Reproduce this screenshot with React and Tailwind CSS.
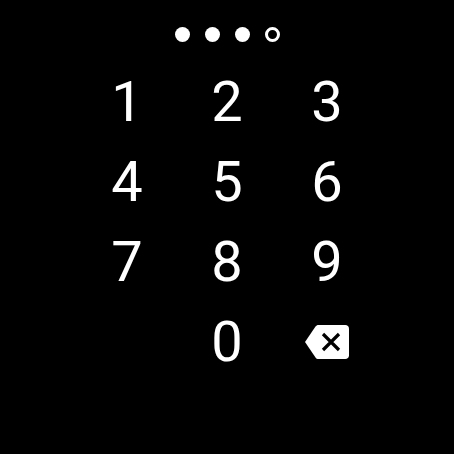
import { useState } from 'react';

const PIN_LENGTH = 4;
const KEYS = ['1', '2', '3', '4', '5', '6', '7', '8', '9', '', '0', 'del'];

function BackspaceIcon() {
  return (
    <svg viewBox="0 0 44 34" className="w-11 h-[34px]" aria-hidden="true">
      <path
        fill="#fff"
        d="M40.3 0H13.5c-1.3 0-2.3.6-3 1.6L0 17l10.500 15.400c.7 1 1.700 1.600 3 1.600h26.800c2 0 3.700-1.500 3.700-3.500v-27c0-2-1.700-3.500-3.700-3.500z"
      />
      <path stroke="#000" strokeWidth="3.200" d="M18 9l16 16M34 9l-16 16" />
    </svg>
  );
}

export default function App() {
  const [pin, setPin] = useState('123');

  const handlePress = (key) => {
    if (key === 'del') {
      setPin(pin.slice(0, -1));
    } else if (pin.length < PIN_LENGTH) {
      setPin(pin + key);
    }
  };

  return (
    <div className="w-[454px] h-[454px] bg-black text-white font-['Roboto',sans-serif] flex flex-col items-center overflow-hidden">
      <div className="flex gap-[15px] mt-[27px]">
        {Array.from({ length: PIN_LENGTH }).map((_, i) => (
          <span
            key={i}
            className={`w-[15px] h-[15px] rounded-full ${
              i < pin.length ? 'bg-white' : 'border-[3px] border-white'
            }`}
          />
        ))}
      </div>

      <div className="grid grid-cols-[repeat(3,100px)] auto-rows-[80px] mt-[20px]">
        {KEYS.map((key, i) =>
          key === '' ? (
            <span key={i} />
          ) : (
            <button
              key={i}
              onClick={() => handlePress(key)}
              className="flex items-center justify-center text-[56px] leading-none"
            >
              {key === 'del' ? <BackspaceIcon /> : key}
            </button>
          )
        )}
      </div>
    </div>
  );
}
